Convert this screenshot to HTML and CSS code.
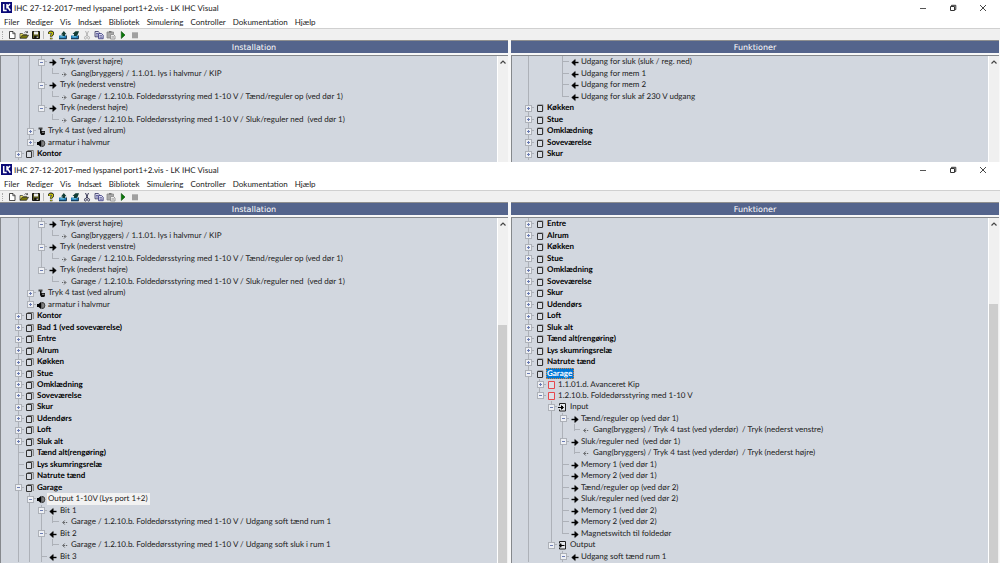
FILE: index.html
```html
<!DOCTYPE html>
<html lang="da">
<head>
<meta charset="utf-8">
<title>LK IHC Visual</title>
<link rel="stylesheet" href="styles.css">
</head>
<body>
<template id="chrome">
  <header class="titlebar">
    <svg class="logo" viewBox="0 0 11 11"><rect width="11" height="11" fill="#0a0a78"/><path d="M2.7 2v6.6h3M6 2v4.500M9 2 6.500 4.800 9.300 8.800" fill="none" stroke="#fff" stroke-width="1.500"/></svg>
    <h1 class="title">IHC 27-12-2017-med lyspanel port1+2.vis - LK IHC Visual</h1>
    <div class="controls">
      <button class="control" aria-label="Minimer"><svg viewBox="0 0 8 8"><path d="M1 4.500h6" stroke="#555"/></svg></button>
      <button class="control" aria-label="Gendan"><svg viewBox="0 0 8 8"><path d="M1.500 2.500h4v4h-4zM2.500 2V1.300h4.300v4.300H6" fill="none" stroke="#333"/></svg></button>
      <button class="control" aria-label="Luk"><svg viewBox="0 0 8 8"><path d="m1 1 6 6M7 1 1 7" stroke="#333" stroke-width=".9"/></svg></button>
    </div>
  </header>
  <nav class="menubar">
    <button>Filer</button><button>Rediger</button><button>Vis</button><button>Indsæt</button><button>Bibliotek</button><button>Simulering</button><button>Controller</button><button>Dokumentation</button><button>Hjælp</button>
  </nav>
  <div class="toolbar">
    <span class="grip"></span>
    <button class="tool" aria-label="Ny"><svg viewBox="0 0 10 10"><path d="M2.500 1.500h3.500l2 2v5h-5.500z" fill="#fff" stroke="#222" stroke-width=".8"/><path d="M5.800 1.500v2.200h2.200" fill="none" stroke="#222" stroke-width=".7"/></svg></button>
    <button class="tool" aria-label="Åbn"><svg viewBox="0 0 10 10"><path d="M1 8V3.500h2.500l.8.900H7.500V5.500" fill="#e8e060" stroke="#333" stroke-width=".7"/><path d="M1 8.300 3 5.300h6.500L7.500 8.300z" fill="#77770a" stroke="#222" stroke-width=".7"/><path d="M5.500 2.500c1-1.300 2-1 3 0V1.200M8.500 2.600H7.200" fill="none" stroke="#222" stroke-width=".7"/></svg></button>
    <button class="tool" aria-label="Gem"><svg viewBox="0 0 10 10"><path d="M1.500 1.500h7v7h-7z" fill="#55551a" stroke="#111"/><path d="M3 1.500h4v3H3z" fill="#eee"/><path d="M3.200 6h3.800v2.500H3.200z" fill="#111"/><path d="M5.700 6.500h1V8h-1z" fill="#fff"/></svg></button>
    <span class="separator"></span>
    <button class="tool" aria-label="Hjælp"><svg viewBox="0 0 10 10"><path d="M3.300 4V2.600Q5 1 6.700 2.600V4L5.200 5.500V6.700M5.200 7.700v1.500" fill="none" stroke="#222" stroke-width="2.500"/><path d="M3.300 3.700V2.800Q5 1.300 6.600 2.800V3.900L5.100 5.400V6.500M5.100 8v1" fill="none" stroke="#c9c80a" stroke-width="1.200"/></svg></button>
    <button class="tool" aria-label="Send"><svg viewBox="0 0 10 10"><path d="M1 5.500h7.500v3.700H1z" fill="#1c78b4"/><path d="M1 8.700h7.500V5.500" fill="none" stroke="#123" stroke-width=".8"/><path d="M3 4.500 5.800 1 8.500 4.200H7V6H4.500V4.500z" fill="#123c35"/><path d="M2.300 6.800h4" stroke="#8de0ef" stroke-width=".8"/></svg></button>
    <button class="tool" aria-label="Hent"><svg viewBox="0 0 10 10"><path d="M1 5.500h7.500v3.700H1z" fill="#1c78b4"/><path d="M1 8.700h7.500V5.500" fill="none" stroke="#123" stroke-width=".8"/><path d="M2.500 4 5.500 1.200H9L7.800 4.500 6.500 6H4V4z" fill="#123c35"/><path d="M2.300 6.800h4" stroke="#8de0ef" stroke-width=".8"/></svg></button>
    <button class="tool cut" aria-label="Klip"><svg viewBox="0 0 10 10"><path d="M3.500 1 6 6.500M6.500 1 4 6.500" fill="none" stroke="currentColor" stroke-width=".9"/><ellipse cx="3.400" cy="7.800" rx="1" ry="1.300" fill="none" stroke="currentColor" stroke-width=".8"/><ellipse cx="6.600" cy="7.800" rx="1" ry="1.300" fill="none" stroke="currentColor" stroke-width=".8"/></svg></button>
    <button class="tool" aria-label="Kopier"><svg viewBox="0 0 10 10"><path d="M1 1.500h3.200l1.300 1.300v4H1z" fill="#dde" stroke="#33335f" stroke-width=".8"/><path d="M4.500 3.500h3l1.700 1.700v3.500H4.500z" fill="#dde" stroke="#33337f" stroke-width=".8"/><path d="M2 3.500h2M2 5h2M5.500 5.700h2.500M5.500 7.200h3" stroke="#33337f" stroke-width=".7"/></svg></button>
    <button class="tool" aria-label="Sæt ind"><svg viewBox="0 0 10 10"><path d="M1 2h6.500v6H1z" fill="#aaa" stroke="#888" stroke-width=".8"/><path d="M3 1h2.500v1.500H3z" fill="#777"/><path d="M4.500 4.500h3l1.500 1.500v3H4.500z" fill="#eee" stroke="#888" stroke-width=".8"/><path d="M5.500 6.500h2.500M5.500 7.700h2.500" stroke="#999" stroke-width=".6"/></svg></button>
    <button class="tool" aria-label="Start"><svg viewBox="0 0 10 10"><path d="M3.300 1.500 7 5 3.300 8.500z" fill="#087b08" stroke="#064606" stroke-width=".6"/></svg></button>
    <button class="tool" aria-label="Stop"><svg viewBox="0 0 10 10"><path d="M2 2.300h6v6H2z" fill="#a0a0a0"/></svg></button>
  </div>
</template>

<svg class="sprite" aria-hidden="true">
  <symbol id="in" viewBox="0 0 10 10"><path d="M1.500 5.500H6" stroke="#000" stroke-width="1.400"/><path d="M4.800 2.500 8.300 5.500 4.800 8.500V6.500L5.500 5.500 4.800 4.500z" fill="#000" stroke="#000" stroke-width=".6"/></symbol>
  <symbol id="out" viewBox="0 0 10 10"><path d="M8.500 5.500H4" stroke="#000" stroke-width="1.400"/><path d="M5.200 2.500 1.700 5.500 5.200 8.500V6.500L4.500 5.500 5.200 4.500z" fill="#000" stroke="#000" stroke-width=".6"/></symbol>
  <symbol id="link-in" viewBox="0 0 10 10"><path d="M2 5.500h1.200M4 5.500h1.500M4 3.500 6 5.500 4 7.500" fill="none" stroke="#444" stroke-width=".8"/></symbol>
  <symbol id="link-out" viewBox="0 0 10 10"><path d="M7.200 5.500H6M5.200 5.500h-2M4.700 3.500 2.700 5.500 4.700 7.500" fill="none" stroke="#444" stroke-width=".8"/></symbol>
  <symbol id="room" viewBox="0 0 10 10"><path d="M2.500 1.500h5.800v6.500" fill="none" stroke="#777"/><path d="M1.500 2.500h5v6h-5z" fill="#d8dce3" stroke="#333"/></symbol>
  <symbol id="room-flat" viewBox="0 0 10 10"><path d="M2.500 1.500h5.500v6.500" fill="none" stroke="#a4a8ae"/><path d="M2.500 2.500h5v6h-5z" fill="#d8dce3" stroke="#333"/></symbol>
  <symbol id="block" viewBox="0 0 10 10"><path d="M1.500 1.500h6v7h-6z" fill="#dde0e6" stroke="#e6484c"/></symbol>
  <symbol id="press" viewBox="0 0 10 10"><path d="M1.500 1.500h4v2h-4z" fill="#444"/><path d="M3 3h1.500v2h3.500v2.500L7.300 9H4.200L3 7z" fill="#111"/><path d="M5 6.300h2.500" stroke="#ccc" stroke-width=".7"/></symbol>
  <symbol id="lamp" viewBox="0 0 10 10"><path d="M0 4h1.500L4 2v7L1.500 7H0z" fill="#000"/><path d="M4.700 2.300A3.200 3.200 0 0 1 4.700 8.700z" fill="#666" stroke="#222" stroke-width=".7"/><path d="M6 3.500v4" stroke="#ccc" stroke-width=".6"/></symbol>
  <symbol id="input" viewBox="0 0 10 10"><path d="M1.500 3.500V1.500h6v7.500h-6V7.500" fill="#e5e8ec" stroke="#222"/><path d="M0 5.500h4M3.500 3.700 5.500 5.500 3.500 7.200z" fill="#000" stroke="#000"/></symbol>
  <symbol id="output" viewBox="0 0 10 10"><path d="M1.500 3.500V1.500h6v7.500h-6V7.500" fill="#e5e8ec" stroke="#222"/><path d="M6.500 5.500H2M3 3.700 1 5.500 3 7.200z" fill="#000" stroke="#000"/></symbol>
</svg>

<main class="screen">
  <section class="window cut-disabled">
    <div class="panes">
      <section class="pane"><h2>Installation</h2><div class="view"><ul class="tree" data-tree="installationTop"></ul><div class="scrollbar"><button class="up" aria-label="Rul op"><svg viewBox="0 0 8 8"><path d="m1.500 5.500 2.500-2.500L6.500 5.500" fill="none" stroke="#444" stroke-width="1.200"/></svg></button></div></div></section>
      <section class="pane"><h2>Funktioner</h2><div class="view"><ul class="tree" data-tree="functionsTop"></ul><div class="scrollbar"><button class="up" aria-label="Rul op"><svg viewBox="0 0 8 8"><path d="m1.500 5.500 2.500-2.500L6.500 5.500" fill="none" stroke="#444" stroke-width="1.200"/></svg></button></div></div></section>
    </div>
  </section>
  <section class="window">
    <div class="panes">
      <section class="pane"><h2>Installation</h2><div class="view"><ul class="tree" data-tree="installation"></ul><div class="scrollbar"><button class="up" aria-label="Rul op"><svg viewBox="0 0 8 8"><path d="m1.500 5.500 2.500-2.500L6.500 5.500" fill="none" stroke="#444" stroke-width="1.200"/></svg></button><div class="thumb thumb-low"></div></div></div></section>
      <section class="pane"><h2>Funktioner</h2><div class="view"><ul class="tree" data-tree="functions"></ul><div class="scrollbar"><button class="up" aria-label="Rul op"><svg viewBox="0 0 8 8"><path d="m1.500 5.500 2.500-2.500L6.500 5.500" fill="none" stroke="#444" stroke-width="1.200"/></svg></button><div class="thumb thumb-high"></div></div></div></section>
    </div>
  </section>
</main>
<script src="tree.js"></script>
</body>
</html>
```
FILE: styles.css
```css
* { box-sizing: border-box; }
body { margin: 0; background: #fff; color: #222; font: 8px/12px Lato, "Noto Sans", sans-serif; text-rendering: geometricPrecision; }
button { margin: 0; padding: 0; border: 0; background: none; color: inherit; font: inherit; }
svg { display: block; }
.sprite { display: none; }
.screen { display: grid; grid-template-rows: 162px minmax(0, 1fr); height: 100vh; }
.window { display: flex; flex-direction: column; min-height: 0; overflow: hidden; background: #fff; }

.titlebar { display: flex; align-items: center; flex: none; height: 15px; padding: 0 2px 0 1px; }
.logo { width: 11px; height: 11px; margin-right: 2px; }
.title { flex: 1; margin: 0; font-size: 8px; font-weight: 400; white-space: nowrap; }
.controls { display: flex; }
.control { display: grid; place-items: center; width: 30px; height: 15px; }
.control svg { width: 8px; height: 8px; }

.menubar { display: flex; flex: none; gap: 7px; height: 13px; padding-left: 4px; }
.toolbar { display: flex; align-items: center; flex: none; height: 12px; border-top: 1px solid #d0d0d0; background: #f0f0f0; }
.grip { width: 1px; height: 8px; margin: 0 3px 0 2px; border-left: 1px dotted #aaa; }
.separator { width: 1px; height: 8px; margin: 0 1px; background: #bbb; }
.tool { display: grid; place-items: center; width: 12px; height: 12px; }
.tool svg { width: 10px; height: 10px; }
.cut { color: #224; }
.cut-disabled .cut { color: #aaa; }

.panes { display: grid; grid-template-columns: 508fr 489fr; gap: 3px; flex: 1; min-height: 0; background: #f8f8f8; }
.pane { display: flex; flex-direction: column; min-width: 0; min-height: 0; }
.pane + .pane { margin-right: 1px; }
.pane h2 { flex: none; height: 13px; margin: 0 0 2px; border-top: 1px solid #8f8f8f; background: #54648c; color: #fff; font: 8px/14px "DejaVu Sans", sans-serif; text-align: center; }
.view { display: flex; flex: 1; min-height: 0; border-top: 1px solid #85888c; border-left: 1px solid #85888c; background: #d2d7df; }
.tree { flex: 1; min-width: 0; margin: 0; padding: 0 0 0 12px; overflow: hidden; list-style: none; }
.pane + .pane .tree { padding-left: 11px; }

.row { display: flex; height: 11px; white-space: pre; }
.row:nth-child(odd) { height: 12px; }
.row:nth-child(15n) { height: 11px; }
.cell { position: relative; flex: none; width: 12px; display: grid; place-items: center; }
.cell:nth-child(odd) { width: 11px; }
.cell svg { width: 10px; height: 10px; }
.down::before { content: ""; position: absolute; left: 5px; top: 0; bottom: 0; width: 1px; background: #adb1b8; }
.half::before { bottom: 5px; }
.across::after { content: ""; position: absolute; left: 5px; right: 0; top: 5px; height: 1px; background: #adb1b8; }
.toggle { position: relative; z-index: 1; width: 7px; height: 7px; border: 1px solid #adb1b8; background: #eef0f4; }
.toggle::before { content: ""; position: absolute; left: 1px; top: 2px; width: 3px; height: 1px; background: #6c7db4; }
.plus::after { content: ""; position: absolute; left: 2px; top: 1px; width: 1px; height: 3px; background: #6c7db4; }
.label { padding: 0 2px 0 1px; line-height: 11px; }
.bold { color: #000; font-weight: 700; }
.marked { background: #f2f2f2; }
.selected { border: 1px dotted #d98232; padding: 0 1px 0 0; line-height: 9px; background: #0078d7; color: #fff; }

.scrollbar { flex: none; width: 11px; display: flex; flex-direction: column; border-left: 1px solid #fff; background: #f0f0f0; }
.up { display: grid; place-items: center; width: 10px; height: 11px; flex: none; }
.up svg { width: 8px; height: 8px; }
.thumb { flex: none; width: 9px; background: #cdcdcd; }
.thumb-low { height: 69%; margin-top: auto; }
.thumb-high { height: 75%; margin-top: auto; }
```
FILE: tree.js
```js
// Each row is [branches, icon, label, state].
// Branches: "|" line, "t" tee, "L" elbow, "+"/"-" toggle, "p"/"m" toggle on the last sibling.
const upper = [
  ["||-", "in", "Tryk (øverst højre)"],
  ["|||L", "link-in", "Gang(bryggers) / 1.1.01. lys i halvmur / KIP"],
  ["||-", "in", "Tryk (nederst venstre)"],
  ["|||L", "link-in", "Garage / 1.2.10.b. Foldedørsstyring med 1-10 V / Tænd/reguler op (ved dør 1)"],
  ["||m", "in", "Tryk (nederst højre)"],
  ["|| L", "link-in", "Garage / 1.2.10.b. Foldedørsstyring med 1-10 V / Sluk/reguler ned  (ved dør 1)"],
  ["|+", "press", "Tryk 4 tast (ved alrum)"],
  ["|p", "lamp", "armatur i halvmur"],
  ["+", "room", "Kontor"]
];
const rooms = (names, icon = "room") => names.map(name => ["+", icon, name]);

const trees = {
  installationTop: upper,
  functionsTop: [
    ["|  t", "out", "Udgang for sluk (sluk / reg. ned)"],
    ["|  t", "out", "Udgang for mem 1"],
    ["|  t", "out", "Udgang for mem 2"],
    ["|  L", "out", "Udgang for sluk af 230 V udgang"],
    ...rooms(["Køkken", "Stue", "Omklædning", "Soveværelse", "Skur"], "room-flat")
  ],
  installation: [
    ...upper,
    ...rooms(["Bad 1 (ved soveværelse)", "Entre", "Alrum", "Køkken", "Stue", "Omklædning", "Soveværelse", "Skur", "Udendørs", "Loft", "Sluk alt"]),
    ["t", "room", "Tænd alt(rengøring)"],
    ["t", "room", "Lys skumringsrelæ"],
    ["t", "room", "Natrute tænd"],
    ["-", "room", "Garage"],
    ["|-", "lamp", "Output 1-10V (Lys port 1+2)", "marked"],
    ["||-", "out", "Bit 1"],
    ["|||L", "link-out", "Garage / 1.2.10.b. Foldedørsstyring med 1-10 V / Udgang soft tænd rum 1"],
    ["||-", "out", "Bit 2"],
    ["|||L", "link-out", "Garage / 1.2.10.b. Foldedørsstyring med 1-10 V / Udgang soft sluk i rum 1"],
    ["||t", "out", "Bit 3"]
  ],
  functions: [
    ...rooms(["Entre", "Alrum", "Køkken", "Stue", "Omklædning", "Soveværelse", "Skur", "Udendørs", "Loft", "Sluk alt", "Tænd alt(rengøring)", "Lys skumringsrelæ", "Natrute tænd"], "room-flat"),
    ["-", "room-flat", "Garage", "selected"],
    ["|+", "block", "1.1.01.d. Avanceret Kip"],
    ["|m", "block", "1.2.10.b. Foldedørsstyring med 1-10 V"],
    ["| -", "input", "Input"],
    ["| |-", "in", "Tænd/reguler op (ved dør 1)"],
    ["| ||L", "link-out", "Gang(bryggers) / Tryk 4 tast (ved yderdør)  / Tryk (nederst venstre)"],
    ["| |-", "in", "Sluk/reguler ned  (ved dør 1)"],
    ["| ||L", "link-out", "Gang(bryggers) / Tryk 4 tast (ved yderdør)  / Tryk (nederst højre)"],
    ["| |t", "in", "Memory 1 (ved dør 1)"],
    ["| |t", "in", "Memory 2 (ved dør 1)"],
    ["| |t", "in", "Tænd/reguler op (ved dør 2)"],
    ["| |t", "in", "Sluk/reguler ned (ved dør 2)"],
    ["| |t", "in", "Memory 1 (ved dør 2)"],
    ["| |t", "in", "Memory 2 (ved dør 2)"],
    ["| |L", "in", "Magnetswitch til foldedør"],
    ["| m", "output", "Output"],
    ["|  -", "out", "Udgang soft tænd rum 1"]
  ]
};

const cellClass = {
  " ": "cell", "|": "cell down", "t": "cell down across", "L": "cell down half across",
  "+": "cell down across", "-": "cell down across",
  "p": "cell down half across", "m": "cell down half across"
};

function cell(branch) {
  const plus = "+p".includes(branch);
  const toggle = "+-pm".includes(branch)
    ? `<button class="toggle${plus ? " plus" : ""}" aria-label="${plus ? "Udvid" : "Skjul"}"></button>` : "";
  return `<span class="${cellClass[branch]}">${toggle}</span>`;
}

function row([branches, icon, label, state = ""]) {
  const bold = icon.startsWith("room") ? "bold" : "";
  return `<li class="row">${[...branches].map(cell).join("")}` +
    `<span class="cell"><svg><use href="#${icon}"/></svg></span>` +
    `<span class="label ${bold} ${state}">${label}</span></li>`;
}

document.querySelectorAll("[data-tree]").forEach(list => {
  list.innerHTML = trees[list.dataset.tree].map(row).join("");
});
document.querySelectorAll(".window").forEach(win => {
  win.prepend(document.getElementById("chrome").content.cloneNode(true));
});
```
